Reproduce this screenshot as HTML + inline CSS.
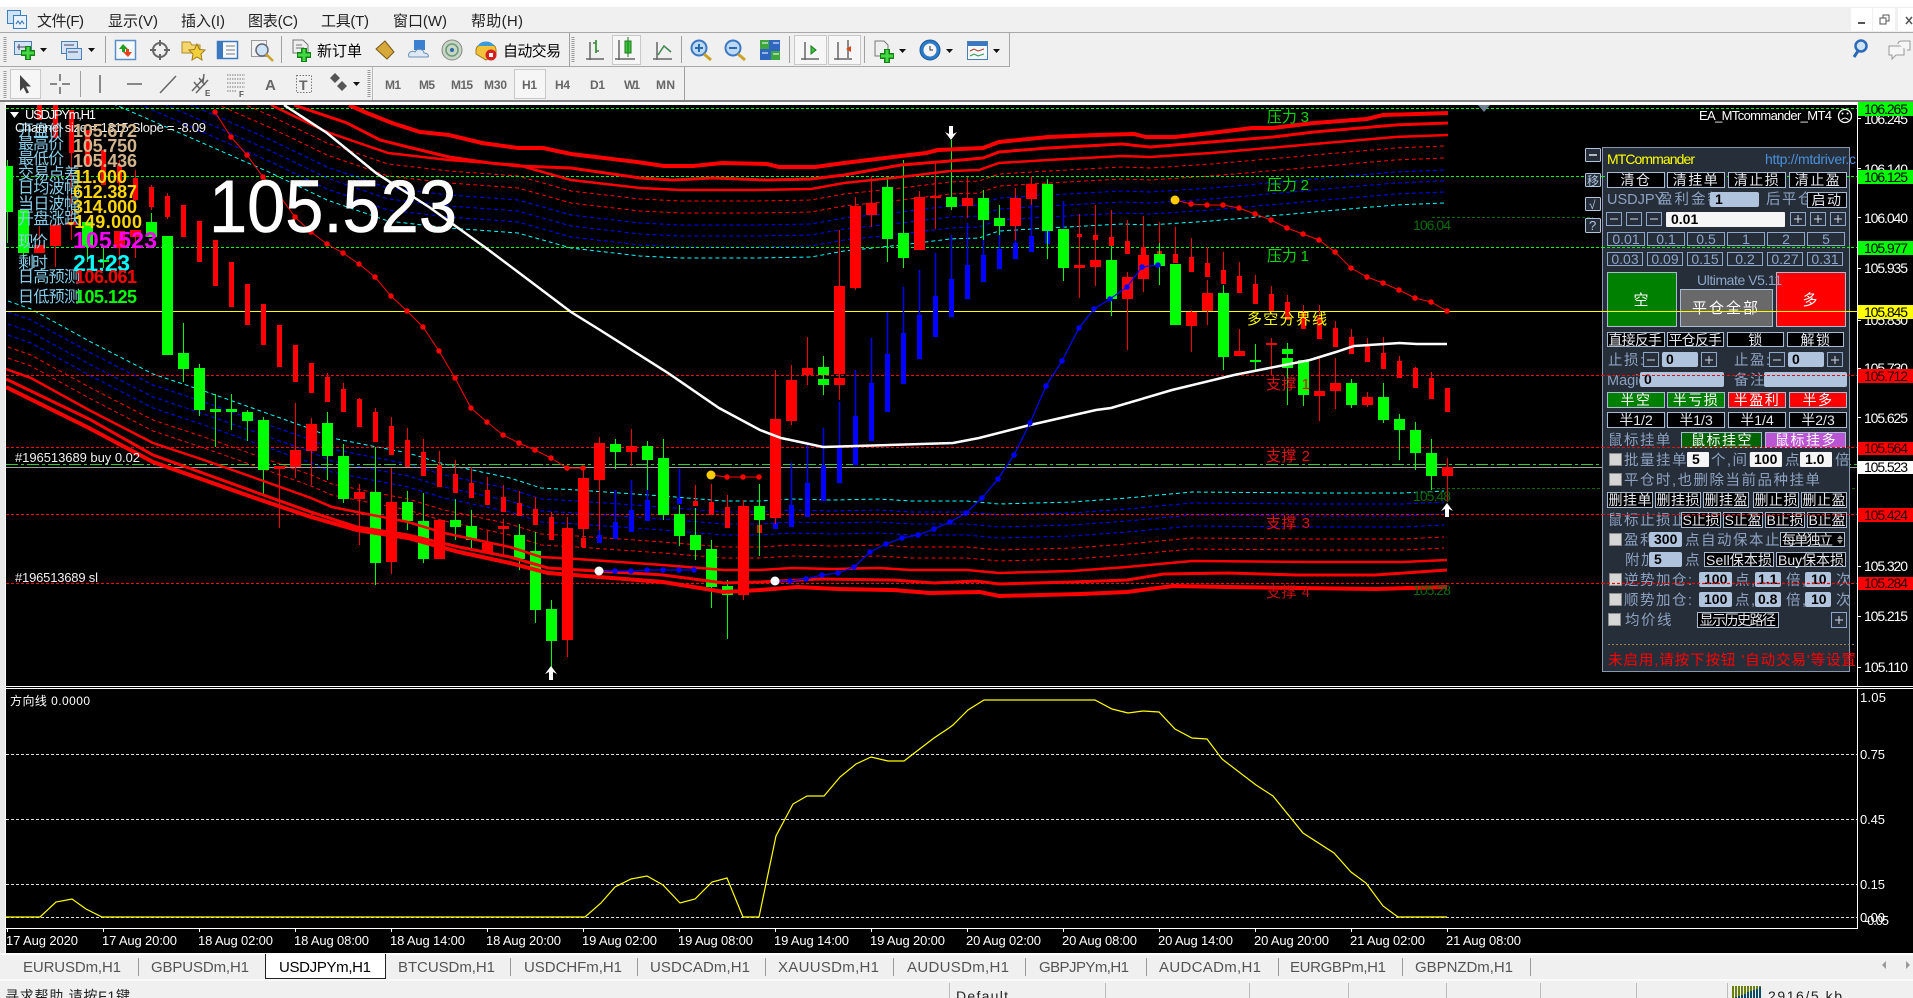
<!DOCTYPE html>
<html lang="zh"><head><meta charset="utf-8"><title>MT4</title>
<style>
html,body{margin:0;padding:0;background:#000;width:1913px;height:998px;overflow:hidden}
svg{display:block}
text{font-family:"Liberation Sans","WenQuanYi Zen Hei","Noto Sans CJK SC",sans-serif}
.cj{font-family:"Liberation Sans","Noto Sans CJK SC","WenQuanYi Zen Hei",sans-serif}
.m{font-size:15px;fill:#222}
.tf{font-size:12px;fill:#666;font-weight:bold}
.ax{font-size:14px;fill:#fff}
.axk{font-size:14px;fill:#000}
.tm{font-size:13px;fill:#fff}
.tab{font-size:15px;fill:#555}
.lb{font-size:16px;fill:#87ceeb}
.v{font-size:18px;font-weight:bold}
.bt{font-size:14px;fill:#e4e9f0;text-anchor:middle;letter-spacing:1.5px}
.nm{font-size:14px;fill:#8ea6c8;text-anchor:middle}
.l{font-size:14.5px;fill:#8ea2c0;letter-spacing:1.5px}
.iv{font-size:14px;font-weight:bold;fill:#000}
.b{fill:#000;stroke:#a9bcd6;stroke-width:1}
.g{fill:#262e3a;stroke:#8ea6c8;stroke-width:1}
.i{fill:#b0c4de}
.w{fill:#f5f5f5}
.ck{fill:#d6d6d6;stroke:#8c8c8c;stroke-width:1}
.sym{stroke:#cfd8e4;stroke-width:1;fill:none}
.ic{fill:none;stroke:#666;stroke-width:1.5}
</style></head><body>
<svg xmlns="http://www.w3.org/2000/svg" width="1913" height="998" viewBox="0 0 1913 998">
<rect width="1913" height="998" fill="#000"/>
<!-- window chrome -->
<rect width="1913" height="7" fill="#fff"/>
<rect y="7" width="1913" height="94" fill="#f0f0f0"/>
<rect x="1851" y="8" width="21" height="23" fill="#fff"/><rect x="1873" y="8" width="22" height="23" fill="#fff"/><rect x="1898" y="8" width="15" height="23" fill="#fff"/>
<path d="M1858 23h7" stroke="#555" stroke-width="2"/><path d="M1880 18h6v6h-6zM1883 18v-3h6v6h-3" stroke="#555" fill="none"/><path d="M1906 17l6 7M1912 17l-6 7" stroke="#555" stroke-width="1.5"/>
<path d="M0 32.500H1913" stroke="#a8a8a8"/><path d="M0 66.500H1009.500V33" stroke="#a8a8a8" fill="none"/>
<path d="M684.500 67V100M281.500 36V63M105.500 36V63M569.500 33V66M681.500 36V63M789.500 36V63M864.500 36V63M80.500 71V97" stroke="#a0a0a0"/>
<path d="M5 37V62M573 37V62M5 71V98M369 70V98" stroke="#999" stroke-width="3" stroke-dasharray="1 1"/>
<path d="M372.500 67V100" stroke="#bbb"/>
<rect y="100" width="1913" height="2" fill="#808080"/><rect y="102" width="1913" height="3" fill="#fff"/>
<rect y="102" width="5" height="851" fill="#e8e8e8"/><rect x="5" y="102" width="1" height="851" fill="#fff"/>
<!-- logo -->
<rect x="7.500" y="10.500" width="13" height="13" fill="#cfe3f7" stroke="#3c7fc0"/><rect x="13.500" y="15.500" width="13" height="13" fill="#e8f2fb" stroke="#3c7fc0"/><path d="M16 24l2-3 2 3 2-3 2 3" stroke="#2a6aa8" fill="none"/>
<text class="m" x="37" y="26" textLength="47">文件(F)</text>
<text class="m" x="108" y="26" textLength="50">显示(V)</text>
<text class="m" x="181" y="26" textLength="44">插入(I)</text>
<text class="m" x="248" y="26" textLength="50">图表(C)</text>
<text class="m" x="321" y="26" textLength="48">工具(T)</text>
<text class="m" x="393" y="26" textLength="54">窗口(W)</text>
<text class="m" x="471" y="26" textLength="52">帮助(H)</text>
<!-- toolbar 1 icons -->
<rect x="14.500" y="41.500" width="17" height="13" fill="#d5e3f5" stroke="#4a7fb5"/><path d="M17 47h8M19 44v6" stroke="#446"/><path d="M28 46v14M21 53h14" stroke="#138013" stroke-width="6"/><path d="M28 47v12M22 53h12" stroke="#45d845" stroke-width="3"/>
<path d="M40 48h7l-3.500 4z" fill="#111"/>
<rect x="61.500" y="41.500" width="16" height="12" fill="#d5e3f5" stroke="#4a7fb5"/><rect x="66.500" y="48.500" width="15" height="11" fill="#cfe0f2" stroke="#4a7fb5"/><path d="M64 45h10M68 52h10" stroke="#446"/>
<path d="M88 48h7l-3.500 4z" fill="#111"/>
<rect x="115.500" y="40.500" width="20" height="19" fill="#f6f9fc" stroke="#5a8fc4" stroke-width="1.500"/><path d="M123 44l-4 5h3v3h3v-3h3z" fill="#1fa11f"/><path d="M128 57l4-5h-3v-3h-3v3h-3z" fill="#e2421e"/>
<circle cx="160" cy="50" r="7" fill="none" stroke="#666" stroke-width="2"/><path d="M160 40v6M160 54v6M150 50h6M164 50h6" stroke="#666" stroke-width="2"/>
<path d="M182 42h8l2 3h8v8h-18z" fill="#f3d76c" stroke="#b08a2a"/><path d="M197 44l2.500 5.500 5.500.5-4 4 1 6-5-3-5 3 1-6-4-4 5.500-.5z" fill="#f3cf3a" stroke="#a07b1a"/>
<rect x="217.500" y="41.500" width="20" height="17" fill="#f6f9fc" stroke="#3c78c0" stroke-width="1.500"/><rect x="218" y="42" width="5" height="16" fill="#3c78c0"/><path d="M226 46h9M226 50h9M226 54h9" stroke="#777"/>
<rect x="251.500" y="40.500" width="15" height="16" fill="#f2f2f2" stroke="#999"/><circle cx="262" cy="50" r="6" fill="#cfe3f7" stroke="#667" stroke-width="1.500"/><path d="M266 54l7 7" stroke="#c9a227" stroke-width="2.500"/>
<path d="M293 40h10l5 5v8h-15z" fill="#eee" stroke="#777"/><path d="M296 45h6M296 48h8" stroke="#777"/><path d="M304 48v14M297 55h14" stroke="#138013" stroke-width="6"/><path d="M304 49v12M298 55h12" stroke="#45d845" stroke-width="3"/>
<text class="m cj" x="317" y="56" textLength="45" style="fill:#000;font-size:15px">新订单</text>
<path d="M376 49l9-8 9 11-7 7z" fill="#d6a93a" stroke="#7a5a1a"/>
<path d="M414 40h11v10h-11z" fill="#3b7fd0"/><path d="M409 57c-2-5 4-7 6-5 2-4 9-3 9 1 4 0 5 3 4 4z" fill="#dfe9f5" stroke="#6b8fb5"/>
<circle cx="452" cy="50" r="10" fill="#c6d6c2" stroke="#888"/><circle cx="452" cy="50" r="6" fill="none" stroke="#6a9a7a" stroke-width="1.500"/><circle cx="452" cy="50" r="2" fill="#2a6aa8"/>
<path d="M476 50c0-8 20-10 20 0v4l-10 6-10-6z" fill="#f2c23a" stroke="#a07b1a"/><path d="M478 46c2-6 14-6 16 0z" fill="#3b9bd8"/><circle cx="491" cy="55" r="5.500" fill="#d42020"/><rect x="489" y="53" width="4" height="4" fill="#fff"/>
<text class="m cj" x="503" y="56" textLength="58" style="fill:#000;font-size:15px">自动交易</text>
<path class="ic" d="M590 42v18M586 59h18M596 40v13M593 43h3M596 51h3" /><path d="M596 40v13" stroke="#1fa11f" stroke-width="1.500"/>
<rect x="612.500" y="35.500" width="28" height="29" fill="#f6f6f6" stroke="#c8c8c8"/><path class="ic" d="M619 40v20M615 59h20"/><rect x="625" y="41" width="6" height="12" fill="#3fc43f" stroke="#1a7a1a"/><path d="M628 37v20" stroke="#1a7a1a"/>
<path class="ic" d="M657 42v18M653 59h19M658 55l6-9 7 6"/><path d="M658 55l6-9 7 6" stroke="#2a9a4a" fill="none"/>
<circle cx="699" cy="48" r="7.500" fill="#bcd9f5" stroke="#3c78c0" stroke-width="2"/><path d="M695 48h8M699 44v8" stroke="#2a6aa8" stroke-width="2"/><path d="M704 54l7 6" stroke="#c9a227" stroke-width="3"/>
<circle cx="733" cy="48" r="7.500" fill="#bcd9f5" stroke="#3c78c0" stroke-width="2"/><path d="M729 48h8" stroke="#2a6aa8" stroke-width="2"/><path d="M738 54l7 6" stroke="#c9a227" stroke-width="3"/>
<rect x="760" y="40" width="20" height="20" fill="#2f66c0"/><rect x="760" y="40" width="9" height="9" fill="#3da63d"/><rect x="771" y="51" width="9" height="9" fill="#3da63d"/><path d="M762 43h6M773 43h6M762 53h6M773 54h6" stroke="#fff"/>
<rect x="794.500" y="35.500" width="32" height="29" fill="#f6f6f6" stroke="#c8c8c8"/><path class="ic" d="M805 42v18M801 59h18"/><path d="M811 46l5 4-5 4z" fill="#3fc43f" stroke="#1a7a1a"/>
<rect x="828.500" y="35.500" width="32" height="29" fill="#f6f6f6" stroke="#c8c8c8"/><path class="ic" d="M838 42v18M834 59h18M848 40v18"/><path d="M851 46l-5 3 5 3z" fill="#d84a1a"/>
<path d="M875 41h9l4 4v11h-13z" fill="#eee" stroke="#777"/><path d="M887 49v14M880 56h14" stroke="#138013" stroke-width="6"/><path d="M887 50v12M881 56h12" stroke="#45d845" stroke-width="3"/>
<path d="M899 49h7l-3.500 4z" fill="#111"/>
<circle cx="930" cy="50" r="10" fill="#2a7ac8" stroke="#1a5a98"/><circle cx="930" cy="50" r="6.500" fill="#f4f4f4"/><path d="M930 46v4h3" stroke="#333" fill="none"/>
<path d="M946 49h7l-3.500 4z" fill="#111"/>
<rect x="967.500" y="41.500" width="20" height="18" fill="#f4f7fb" stroke="#4a7fb5"/><rect x="968" y="42" width="19" height="4" fill="#3c78c0"/><path d="M970 51l4-2 4 2 6-2" stroke="#b03a1a" fill="none"/><path d="M970 56l4-2 4 2 6-2" stroke="#2a9a4a" fill="none"/>
<path d="M993 49h7l-3.500 4z" fill="#111"/>
<circle cx="1861" cy="46" r="5.500" fill="#cfe3f7" stroke="#2a6ab8" stroke-width="2.500"/><path d="M1858 51l-4 6" stroke="#2a6ab8" stroke-width="3"/>
<path d="M1889 46h15v9h-8l-4 4v-4h-3z" fill="#f6f6f6" stroke="#999"/><path d="M1898 44c0-3 3-3 5-3h7v9h-3" fill="#f6f6f6" stroke="#999"/>
<!-- toolbar 2 -->
<rect x="10.500" y="69.500" width="30" height="29" fill="#f6f6f6" stroke="#c8c8c8"/><path d="M20 75v16l3.500-3.500 3 6 2.500-1-3-6h5z" fill="#444"/>
<path d="M50 84h7M62 84h8M60 74v7M60 87v7" stroke="#666" stroke-width="1.500"/>
<path d="M100 75v18" stroke="#666" stroke-width="1.500"/><path d="M127 84h15" stroke="#666" stroke-width="1.500"/><path d="M160 93l16-17" stroke="#666" stroke-width="1.500"/>
<path d="M192 91l12-13M196 93l12-13M194 82l6 7M199 78l6 7M204 74l-1 8" stroke="#666" stroke-width="1.500"/><text x="205" y="96" style="font-size:8px;font-weight:bold;fill:#555">E</text>
<path d="M227 75h18M227 79h18M227 83h18M227 87h18M227 91h10" stroke="#777" stroke-dasharray="1.500 1"/><text x="239" y="97" style="font-size:8px;font-weight:bold;fill:#555">F</text>
<text x="265" y="90" style="font-size:15px;font-weight:bold;fill:#666" textLength="10">A</text>
<rect x="296.500" y="75.500" width="15" height="17" fill="none" stroke="#777" stroke-dasharray="1.500 1.500"/><text x="299" y="90" style="font-size:14px;font-weight:bold;fill:#666" textLength="10">T</text>
<path d="M335 73l5 5-5 5-5-5zM342 81l5 5-5 5-5-5z" fill="#555"/><path d="M353 82h7l-3.500 4z" fill="#111"/>
<rect x="514.500" y="69.500" width="31" height="29" fill="#f6f6f6" stroke="#c8c8c8"/>
<text class="tf" x="385" y="89" textLength="16">M1</text><text class="tf" x="419" y="89" textLength="16">M5</text><text class="tf" x="451" y="89" textLength="22">M15</text><text class="tf" x="484" y="89" textLength="23">M30</text><text class="tf" x="522" y="89" textLength="15">H1</text><text class="tf" x="555" y="89" textLength="15">H4</text><text class="tf" x="590" y="89" textLength="15">D1</text><text class="tf" x="624" y="89" textLength="16">W1</text><text class="tf" x="656" y="89" textLength="19">MN</text>

<!-- main chart -->
<svg x="6" y="105" width="1851" height="581" viewBox="6 105 1851 581">
<!-- upper dashed channel -->
<g fill="none" stroke-width="1" stroke-dasharray="4 3">
<path id="u" stroke="#f00" transform="translate(0,11)" d="M100 30L271 105 327 132 388 153 449 160 518 165 571 180 640 188 681 190 754 190 811 189 844 183 901 177 950 171 979 170 999 163 1048 160 1122 156 1150 157 1211 153 1280 147 1314 144 1395 137 1444 135"/>
<path stroke="#f00" transform="translate(0,23)" d="M100 30L271 105 327 132 388 153 449 160 518 165 571 180 640 188 681 190 754 190 811 189 844 183 901 177 950 171 979 170 999 163 1048 160 1122 156 1150 157 1211 153 1280 147 1314 144 1395 137 1444 135"/>
<path stroke="#00f" transform="translate(0,35)" d="M100 30L271 105 327 132 388 153 449 160 518 165 571 180 640 188 681 190 754 190 811 189 844 183 901 177 950 171 979 170 999 163 1048 160 1122 156 1150 157 1211 153 1280 147 1314 144 1395 137 1444 135"/>
<path stroke="#00f" transform="translate(0,46)" d="M100 30L271 105 327 132 388 153 449 160 518 165 571 180 640 188 681 190 754 190 811 189 844 183 901 177 950 171 979 170 999 163 1048 160 1122 156 1150 157 1211 153 1280 147 1314 144 1395 137 1444 135"/>
<path stroke="#00f" transform="translate(0,57)" d="M100 30L271 105 327 132 388 153 449 160 518 165 571 180 640 188 681 190 754 190 811 189 844 183 901 177 950 171 979 170 999 163 1048 160 1122 156 1150 157 1211 153 1280 147 1314 144 1395 137 1444 135"/>
<path stroke="#0ff" transform="translate(0,68)" d="M100 30L271 105 327 132 388 153 449 160 518 165 571 180 640 188 681 190 754 190 811 189 844 183 901 177 950 171 979 170 999 163 1048 160 1122 156 1150 157 1211 153 1280 147 1314 144 1395 137 1444 135"/>
<!-- lower dashed channel -->
<path stroke="#f00" transform="translate(0,-12)" d="M8 370L31 378 89 410 153 443 204 460 255 478 311 498 332 507 372 515 408 522 444 533 510 547 541 557 577 559 663 565 724 570 760 570 792 568 833 569 879 568 911 570 967 570 999 573 1072 571 1127 567 1192 561 1311 562 1403 562 1444 560"/>
<path stroke="#f00" transform="translate(0,-23)" d="M8 370L31 378 89 410 153 443 204 460 255 478 311 498 332 507 372 515 408 522 444 533 510 547 541 557 577 559 663 565 724 570 760 570 792 568 833 569 879 568 911 570 967 570 999 573 1072 571 1127 567 1192 561 1311 562 1403 562 1444 560"/>
<path stroke="#00f" transform="translate(0,-35)" d="M8 370L31 378 89 410 153 443 204 460 255 478 311 498 332 507 372 515 408 522 444 533 510 547 541 557 577 559 663 565 724 570 760 570 792 568 833 569 879 568 911 570 967 570 999 573 1072 571 1127 567 1192 561 1311 562 1403 562 1444 560"/>
<path stroke="#00f" transform="translate(0,-46)" d="M8 370L31 378 89 410 153 443 204 460 255 478 311 498 332 507 372 515 408 522 444 533 510 547 541 557 577 559 663 565 724 570 760 570 792 568 833 569 879 568 911 570 967 570 999 573 1072 571 1127 567 1192 561 1311 562 1403 562 1444 560"/>
<path stroke="#00f" transform="translate(0,-58)" d="M8 370L31 378 89 410 153 443 204 460 255 478 311 498 332 507 372 515 408 522 444 533 510 547 541 557 577 559 663 565 724 570 760 570 792 568 833 569 879 568 911 570 967 570 999 573 1072 571 1127 567 1192 561 1311 562 1403 562 1444 560"/>
<path stroke="#0ff" transform="translate(0,-69)" d="M8 370L31 378 89 410 153 443 204 460 255 478 311 498 332 507 372 515 408 522 444 533 510 547 541 557 577 559 663 565 724 570 760 570 792 568 833 569 879 568 911 570 967 570 999 573 1072 571 1127 567 1192 561 1311 562 1403 562 1444 560"/>
</g>
<!-- horizontal lines -->
<g fill="none" stroke-width="1" shape-rendering="crispEdges">
<path d="M6 108.500H1857M6 176.500H1857M6 247.500H1857" stroke="#0f0" stroke-dasharray="3 2"/>
<path d="M6 375.500H1857M6 447.500H1857M6 514.500H1857M6 583.500H1857" stroke="#f00" stroke-dasharray="3 2"/>
<path d="M6 311.500H1857" stroke="#ff0"/>
<path d="M1432 217.500H1593M1432 488.500H1857" stroke="#0a6a0a" stroke-dasharray="3 2"/>
<path d="M6 464.500H1857" stroke="#2ecc2e" stroke-dasharray="12 3 3 3"/>
<path d="M6 467.500H1857" stroke="#a0a0a0"/>
</g>
<!-- thin blue candles -->
<path d="M599 535V543M615 522V539M631 510V532M647 500V521M663 496V511M679 498V504M775 523V529M791 505V527M807 483V517M823 465V501M839 447V483M855 416V465M871 383V441M887 354V412M903 333V384M919 315V359M935 296V337M951 279V317M967 265V299M983 255V282M999 249V269M1015 243V259M1031 236V252M1047 231V244M1063 231V238" stroke="#00f" stroke-width="5" transform="translate(.5,0)" fill="none"/>
<path d="M599 514V535M615 490V522M631 480V510M647 473V500M663 467V496M679 469V498M775 496V523M791 463V505M807 445V483M823 428V465M839 402V447M855 370V416M871 338V383M887 312V354M903 287V333M919 270V315M935 253V296M951 235V279M967 223V265M983 217V255M999 217V249M1015 212V243M1031 203V236M1047 202V231M1063 201V231" stroke="#00f" stroke-width="1.500" transform="translate(.5,0)" fill="none"/>
<!-- thin red candles -->
<path d="M39 105V120M55 105V138M71 110V153M87 130V165M103 150V185M119 165V183M135 178V200M151 187V207M167 196V217M183 205V237M199 221V262M215 240V286M231 262V307M247 284V325M263 304V345M279 325V367M295 345V382M311 363V393M327 377V402M343 389V412M359 399V427M375 412V442M391 426V455M407 440V467M423 452V476M439 465V487M455 474V493M471 483V498M487 490V505M503 497V512M519 503V516M535 509V525M551 517V540M583 538V547M695 501V506M711 502V515M727 507V528M759 525V533M1079 234V237M1095 235V240M1111 237V246M1127 241V254M1143 247V256M1159 251V258M1175 254V263M1191 257V272M1207 263V277M1223 270V284M1239 276V293M1255 284V304M1271 294V311M1287 302V320M1303 313V329M1319 317V339M1335 328V347M1351 337V354M1367 344V362M1383 353V369M1399 361V378M1415 368V388M1431 378V399M1447 388V412" stroke="#f00" stroke-width="5" transform="translate(.5,0)" fill="none"/>
<path d="M119 160V186M135 170V203M151 185V210M167 193V219M327 373V377M343 383V389M359 398V399M375 408V412M391 417V426M407 428V440M423 439V452M439 451V465M455 460V474M471 467V483M487 477V490M503 485V497M519 491V503M535 497V509M551 512V517M695 485V501M711 484V502M727 495V507M1111 210V237M1127 220V241M1143 216V247M1159 222V251M1175 227V254M1191 238V257M1207 247V263M1223 252V270M1239 262V276M1255 275V284M1271 286V294M1287 295V302M1303 305V313M1319 305V317M1335 321V328M1351 329V337M1367 338V344M1383 337V353M1399 356V361M1415 367V368M1431 372V378" stroke="#f00" stroke-width="1" transform="translate(.5,0)" fill="none"/>
<!-- wicks -->
<path d="M7 160V243M23 253V270M87 247V262M103 247V268M151 213V222M183 323V382M199 364V416M215 394V447M231 394V430M247 410V441M263 417V494M327 412V480M343 444V503M375 447V585M407 491V530M423 493V563M455 499V540M471 510V550M519 524V570M535 532V623M551 600V672M615 439V469M647 441V490M663 439V520M679 505V546M695 508V560M711 540V608M727 580V639M759 484V556M823 356V395M887 178V262M903 160V268M951 140V210M983 190V240M999 205V235M1047 179V259M1063 229V281M1111 246V316M1159 243V285M1223 285V370M1255 344V370M1287 343V405M1303 360V406M1351 379V408M1383 383V423M1399 414V460M1415 422V470M1431 439V490" stroke="#0f0" stroke-width="1" transform="translate(.5,0)" fill="none" shape-rendering="crispEdges"/>
<path d="M39 226V253M55 246V267M71 150V240M119 248V272M135 237V258M279 468V528M295 403V478M311 418V485M359 484V545M391 468V574M487 531V552M503 519V555M567 517V657M583 470V545M599 437V530M631 429V466M743 500V600M775 370V524M791 365V425M807 337V385M839 230V400M855 197V290M871 176V227M919 191V250M935 163V229M967 177V218M1015 188V240M1031 176V205M1079 214V298M1095 205V286M1127 272V350M1143 248V292M1191 310V352M1207 280V325M1239 329V356M1271 338V375M1319 358V421M1335 358V409M1367 392V407M1447 458V502" stroke="#f00" stroke-width="1" transform="translate(.5,0)" fill="none" shape-rendering="crispEdges"/>
<!-- bodies -->
<path d="M7 166V212M23 210V253M87 222V247M103 260V262M151 222V237M167 236V355M183 353V369M199 368V410M215 409V412M231 409V412M247 412V421M263 420V470M327 423V456M343 456V499M375 492V563M407 502V521M423 521V559M455 520V527M471 526V540M519 535V559M535 551V610M551 609V641M615 444V452M647 446V460M663 458V515M679 514V536M695 535V550M711 549V587M727 586V595M759 506V520M823 367V375M823 379V385M887 187V239M903 233V258M951 197V207M983 198V220M999 218V226M1047 184V231M1063 229V268M1111 260V299M1159 254V266M1175 264V325M1223 293V357M1255 360V362M1287 349V354M1287 358V368M1303 360V395M1351 383V405M1383 397V420M1399 419V430M1415 430V453M1431 453V476" stroke="#0f0" stroke-width="11" transform="translate(.5,0)" fill="none" shape-rendering="crispEdges"/>
<path d="M39 245V253M55 225V246M71 222V225M119 231V248M135 230V237M279 466V469M295 450V467M311 424V451M359 492V499M391 502V562M439 520V559M487 543V552M503 526V529M567 528V640M583 478V529M599 443V480M631 446V452M743 506V595M775 419V518M791 380V421M807 368V375M839 286V374M839 378V385M855 206V288M871 203V215M919 197V250M935 196V198M967 198V206M1015 198V226M1031 184V199M1079 265V268M1095 260V267M1127 277V299M1143 255V279M1191 312V326M1207 293V311M1239 351V356M1271 343V345M1319 391V396M1335 383V391M1367 397V405M1447 467V476" stroke="#f00" stroke-width="11" transform="translate(.5,0)" fill="none" shape-rendering="crispEdges"/>
<!-- thick envelope -->
<g fill="none" stroke="#f00">
<path stroke-width="4" d="M349 105L367 113 392 123 420 132 449 135 482 143 518 148 543 148 571 154 637 162 664 166 693 166 722 163 767 164 779 167 815 167 844 163 885 158 926 153 938 150 983 148 999 142 1048 137 1097 135 1134 134 1146 137 1175 137 1211 133 1252 128 1273 128 1314 123 1367 119 1383 115 1448 113"/>
<path stroke-width="3" d="M294 105L347 123 380 140 408 147 449 157 490 163 518 166 571 168 640 178 673 180 713 178 767 180 811 179 844 175 901 165 950 161 983 158 999 152 1048 148 1122 144 1150 147 1211 142 1273 137 1314 132 1395 125 1448 123"/>
<path stroke-width="2.500" d="M271 105L327 132 388 153 449 160 518 165 571 180 640 188 681 190 754 190 811 189 844 183 901 177 950 171 979 170 999 163 1048 160 1122 156 1150 157 1211 153 1280 147 1314 144 1395 137 1448 135"/>
<path stroke-width="2.500" d="M6 369L31 378 89 410 153 443 204 460 255 478 311 498 332 507 372 515 408 522 444 533 510 547 541 557 577 559 663 565 724 570 760 570 792 568 833 569 879 568 911 570 967 570 999 573 1072 571 1127 567 1192 561 1311 562 1403 562 1447 560"/>
<path stroke-width="3" d="M6 379L89 419 153 455 255 492 311 512 357 527 408 535 459 547 510 557 548 568 663 575 724 583 760 582 820 579 893 580 934 583 976 581 999 584 1072 582 1127 580 1164 574 1228 573 1297 575 1375 575 1447 570"/>
<path stroke-width="4" d="M6 387L89 428 153 462 255 498 311 517 357 530 408 538 459 552 510 563 548 573 663 582 724 592 760 590 797 587 838 589 893 590 930 593 980 592 999 596 1081 594 1127 592 1173 586 1228 587 1375 589 1447 587"/>
</g>
<!-- white MA -->
<path d="M284 105L327 133 376 173 429 207 486 248 518 272 571 312 600 330 668 373 719 408 760 430 781 438 800 442 823 447 856 446 953 443 979 438 1030 425 1096 410 1111 408 1172 390 1234 375 1310 360 1336 352 1354 346 1399 343 1417 344 1447 344" fill="none" stroke="#fff" stroke-width="2.500"/>
<!-- red dotted -->
<path d="M215 112L231 137 247 155 263 177 279 195 295 217 311 232 327 244 343 253 359 264 375 277 391 296 407 311 423 327 439 351 455 378 471 408 487 422 503 435 519 443 535 450 551 458 567 468 583 468M711 475L727 477 743 477 759 477M1175 200L1191 204 1207 205 1223 205 1239 208 1255 214 1271 220 1287 228 1303 234 1319 240 1335 252 1351 268 1367 277 1383 283 1399 290 1415 298 1431 302 1447 311" fill="none" stroke="#f00" stroke-width="1"/>
<path d="M215 112h0M231 137h0M247 155h0M263 177h0M279 195h0M295 217h0M311 232h0M327 244h0M343 253h0M359 264h0M375 277h0M391 296h0M407 311h0M423 327h0M439 351h0M455 378h0M471 408h0M487 422h0M503 435h0M519 443h0M535 450h0M551 458h0M567 468h0M583 468h0M727 477h0M743 477h0M759 477h0M1191 204h0M1207 205h0M1223 205h0M1239 208h0M1255 214h0M1271 220h0M1287 228h0M1303 234h0M1319 240h0M1335 252h0M1351 268h0M1367 277h0M1383 283h0M1399 290h0M1415 298h0M1431 302h0M1447 311h0" fill="none" stroke="#f00" stroke-width="5.500" stroke-linecap="round"/>
<circle cx="711" cy="475" r="4.500" fill="#ffcc00"/><circle cx="1175" cy="200" r="4.500" fill="#ffcc00"/>
<!-- blue dotted -->
<path d="M599 571L615 571 631 571 647 570 663 570 679 570 694 570M775 581L790 581 806 579 822 575 838 573 854 567 870 552 886 544 902 538 918 535 934 529 950 522 966 513 982 498 998 479 1014 455 1030 423 1046 386 1062 361 1079 328 1094 309 1110 299 1127 287 1142 267 1158 265" fill="none" stroke="#00f" stroke-width="1.200"/>
<path d="M615 571h0M631 571h0M647 570h0M663 570h0M679 570h0M694 570h0M790 581h0M806 579h0M822 575h0M838 573h0M854 567h0M870 552h0M886 544h0M902 538h0M918 535h0M934 529h0M950 522h0M966 513h0M982 498h0M998 479h0M1014 455h0M1030 423h0M1046 386h0M1062 361h0M1079 328h0M1094 309h0M1110 299h0M1127 287h0M1142 267h0M1158 265h0" fill="none" stroke="#00f" stroke-width="5.500" stroke-linecap="round"/>
<circle cx="599" cy="571" r="4.500" fill="#fff"/><circle cx="775" cy="581" r="4.500" fill="#fff"/>
<!-- arrows -->
<path d="M551 666l6 8-4-2v8h-4v-8l-4 2z" fill="#fff"/>
<path d="M1447 503l6 8-4-2v8h-4v-8l-4 2z" fill="#fff"/>
<path d="M951 140l6-8-4 2v-8h-4v8l-4-2z" fill="#fff"/>
<path d="M1478 105h12l-6 7z" fill="#708090"/>
<!-- chart labels -->
<g class="cj">
<text x="1267" y="122" style="font-size:15px;fill:#00ff00;opacity:.85" textLength="42" xml:space="preserve">压力 3</text>
<text x="1267" y="190" style="font-size:15px;fill:#00ff00;opacity:.85" textLength="42" xml:space="preserve">压力 2</text>
<text x="1267" y="261" style="font-size:15px;fill:#00ff00;opacity:.85" textLength="42" xml:space="preserve">压力 1</text>
<text x="1247" y="324" style="font-size:15px;fill:#ffff00" textLength="80">多空分界线</text>
<text x="1266" y="389" style="font-size:15px;fill:#e01010" textLength="44" xml:space="preserve">支撑 1</text>
<text x="1266" y="461" style="font-size:15px;fill:#e01010" textLength="44" xml:space="preserve">支撑 2</text>
<text x="1266" y="528" style="font-size:15px;fill:#e01010" textLength="44" xml:space="preserve">支撑 3</text>
<text x="1266" y="597" style="font-size:15px;fill:#c01010" textLength="44" xml:space="preserve">支撑 4</text>
</g>
<text x="1413" y="230" style="font-size:14px;fill:#0a6a0a" textLength="38">106.04</text>
<text x="1413" y="501" style="font-size:14px;fill:#0a6a0a" textLength="38">105.48</text>
<text x="1413" y="595" style="font-size:14px;fill:#0a6a0a" textLength="38">105.28</text>
<path d="M10 112h9l-4.500 6z" fill="#fff"/>
<text x="25" y="119" style="font-size:13px;fill:#fff" textLength="71">USDJPYm,H1</text>
<text class="cj" x="18" y="136" style="font-size:16px;fill:#87ceeb" textLength="46">开盘价</text>
<text x="15" y="132" style="font-size:13px;fill:#f0f0f0" textLength="191">Channel size = 1315 Slope = -8.09</text>
<text class="v" x="73" y="137" fill="#d2b48c" textLength="64">105.672</text>
<text class="lb" x="18" y="149" textLength="46">最高价</text><text class="v" x="73" y="152" fill="#d2b48c" textLength="64">105.750</text>
<text class="lb" x="18" y="164" textLength="46">最低价</text><text class="v" x="73" y="167" fill="#d2b48c" textLength="64">105.436</text>
<text class="lb" x="18" y="179" textLength="62">交易点差</text><text class="v" x="73" y="183" fill="#ffd700" textLength="54">11.000</text>
<text class="lb" x="18" y="193" textLength="62">日均波幅</text><text class="v" x="73" y="198" fill="#ffd700" textLength="64">612.387</text>
<text class="lb" x="18" y="209" textLength="62">当日波幅</text><text class="v" x="73" y="213" fill="#ffd700" textLength="64">314.000</text>
<text class="lb" x="18" y="224" textLength="62">开盘涨跌</text><text class="v" x="68" y="228" fill="#ffd700" textLength="74">-149.000</text>
<text class="lb" x="18" y="247" textLength="30">现价</text><text class="v" x="73" y="248" fill="#ff00ff" style="font-size:23px" textLength="84">105.523</text>
<text class="lb" x="18" y="268" textLength="30">剩时</text><text class="v" x="73" y="271" fill="#00ffff" style="font-size:23px" textLength="57">21:23</text>
<text class="lb" x="18" y="282" textLength="62">日高预测</text><text class="v" x="75" y="283" fill="#ff0000" textLength="62">106.061</text>
<text class="lb" x="18" y="302" textLength="62">日低预测</text><text class="v" x="75" y="303" fill="#00ff00" textLength="62">105.125</text>
<text x="209" y="232" style="font-size:74px;fill:#fff;stroke:#fff;stroke-width:.6" textLength="248" lengthAdjust="spacingAndGlyphs">105.523</text>
<text x="15" y="462" style="font-size:13px;fill:#f0f0f0" textLength="125">#196513689 buy 0.02</text>
<text x="15" y="582" style="font-size:13px;fill:#f0f0f0" textLength="83">#196513689 sl</text>
<text x="1699" y="120" style="font-size:13px;fill:#fff" textLength="133">EA_MTcommander_MT4</text>
<circle cx="1845" cy="116" r="6.500" fill="none" stroke="#fff" stroke-width="1.300"/><path d="M1842.500 113.500h.01M1847.500 113.500h.01" stroke="#fff" stroke-width="2" stroke-linecap="round"/><path d="M1841.500 120c2-2.500 5-2.500 7 0" stroke="#fff" fill="none"/>
</svg>

<!-- axis main -->
<path d="M1857.500 105V686" stroke="#fff"/>
<path d="M1858 118.500h3M1858 168.500h3M1858 217.500h3M1858 268.500h3M1858 320.500h3M1858 368.500h3M1858 417.500h3M1858 566.500h3M1858 616.500h3M1858 667.500h3" stroke="#fff"/>
<text class="ax" x="1864" y="124" textLength="44">106.245</text>
<text class="ax" x="1864" y="174" textLength="44">106.140</text>
<text class="ax" x="1864" y="223" textLength="44">106.040</text>
<text class="ax" x="1864" y="273" textLength="44">105.935</text>
<text class="ax" x="1864" y="325" textLength="44">105.830</text>
<text class="ax" x="1864" y="373" textLength="44">105.730</text>
<text class="ax" x="1864" y="423" textLength="44">105.625</text>
<text class="ax" x="1864" y="571" textLength="44">105.320</text>
<text class="ax" x="1864" y="621" textLength="44">105.215</text>
<text class="ax" x="1864" y="672" textLength="44">105.110</text>
<rect x="1858" y="102" width="55" height="14" fill="#0f0"/><text class="axk" x="1864" y="114" textLength="44">106.265</text>
<rect x="1858" y="170" width="55" height="14" fill="#0f0"/><text class="axk" x="1864" y="182" textLength="44">106.125</text>
<rect x="1858" y="241" width="55" height="14" fill="#0f0"/><text class="axk" x="1864" y="253" textLength="44">105.977</text>
<rect x="1858" y="305" width="55" height="14" fill="#ff0"/><text class="axk" x="1864" y="317" textLength="44">105.845</text>
<rect x="1858" y="369" width="55" height="14" fill="#f00"/><text class="axk" x="1864" y="381" textLength="44" opacity=".85">105.712</text>
<rect x="1858" y="442" width="55" height="13" fill="#f00"/><text class="axk" x="1864" y="453" textLength="44" opacity=".85">105.564</text>
<rect x="1858" y="461" width="55" height="13" fill="#fff"/><text class="axk" x="1864" y="472" textLength="44">105.523</text>
<rect x="1858" y="508" width="55" height="14" fill="#f00"/><text class="axk" x="1864" y="520" textLength="44" opacity=".85">105.424</text>
<rect x="1858" y="577" width="55" height="13" fill="#f00"/><text class="axk" x="1864" y="588" textLength="44" opacity=".85">105.284</text>

<!-- side buttons -->
<g>
<rect x="1585.500" y="148.500" width="15" height="13" rx="1" fill="#262e3a" stroke="#b0c4de"/><path d="M1589 155h8" stroke="#e4e9f0" stroke-width="1.500"/>
<rect x="1585.500" y="173.500" width="15" height="13" rx="1" fill="#262e3a" stroke="#b0c4de"/><text class="cj" x="1587" y="185" style="font-size:12px;fill:#b0c4de">移</text>
<rect x="1585.500" y="197.500" width="15" height="13" rx="1" fill="#262e3a" stroke="#b0c4de"/><text x="1589" y="209" style="font-size:12px;fill:#b0c4de">√</text>
<rect x="1585.500" y="218.500" width="15" height="14" rx="1" fill="#262e3a" stroke="#b0c4de"/><text x="1589" y="230" style="font-size:13px;fill:#b0c4de">?</text>
</g>
<!-- panel -->
<rect x="1602.500" y="147.500" width="247" height="524" fill="#262e3a" stroke="#8898ae"/>
<path d="M1602 176.500H1850M1602 247.500H1850" stroke="#0f0" stroke-dasharray="3 2"/>
<text x="1607" y="164" style="font-size:14px;fill:#ffff00" textLength="88">MTCommander</text>
<text x="1765" y="164" style="font-size:14px;fill:#4a90d9" textLength="91">http://mtdriver.c</text>
<g class="cj">
<rect class="b" x="1607.500" y="172.500" width="57" height="15"/><text class="bt" x="1636" y="185">清仓</text>
<rect class="b" x="1667.500" y="172.500" width="57" height="15"/><text class="bt" x="1696" y="185">清挂单</text>
<rect class="b" x="1728.500" y="172.500" width="57" height="15"/><text class="bt" x="1757" y="185">清止损</text>
<rect class="b" x="1789.500" y="172.500" width="57" height="15"/><text class="bt" x="1818" y="185">清止盈</text>
<text class="l" x="1607" y="204" style="letter-spacing:0">USDJPY</text><text class="l" x="1658" y="204" style="letter-spacing:2px">盈利金额</text>
<rect class="i" x="1710" y="192" width="49" height="15" rx="2"/><text class="iv" x="1715" y="204">1</text>
<text class="l" x="1766" y="204">后平仓</text>
<rect class="b" x="1807.500" y="192.500" width="39" height="15"/><text class="bt" x="1827" y="205">启动</text>
<rect class="g" x="1606.500" y="212.500" width="15" height="13"/><path d="M1610 219h8" class="sym"/>
<rect class="g" x="1626.500" y="212.500" width="15" height="13"/><path d="M1630 219h8" class="sym"/>
<rect class="g" x="1646.500" y="212.500" width="15" height="13"/><path d="M1650 219h8" class="sym"/>
<rect class="w" x="1666" y="212" width="119" height="15" rx="1"/><text class="iv" x="1671" y="224">0.01</text>
<rect class="g" x="1790.500" y="212.500" width="15" height="13"/><path d="M1794 219h8M1798 215v8" class="sym"/>
<rect class="g" x="1810.500" y="212.500" width="15" height="13"/><path d="M1814 219h8M1818 215v8" class="sym"/>
<rect class="g" x="1830.500" y="212.500" width="15" height="13"/><path d="M1834 219h8M1838 215v8" class="sym"/>
<rect class="g" x="1607.500" y="232.500" width="37" height="13"/><text class="nm" x="1626" y="244">0.01</text>
<rect class="g" x="1647.500" y="232.500" width="37" height="13"/><text class="nm" x="1666" y="244">0.1</text>
<rect class="g" x="1687.500" y="232.500" width="37" height="13"/><text class="nm" x="1706" y="244">0.5</text>
<rect class="g" x="1727.500" y="232.500" width="37" height="13"/><text class="nm" x="1746" y="244">1</text>
<rect class="g" x="1767.500" y="232.500" width="37" height="13"/><text class="nm" x="1786" y="244">2</text>
<rect class="g" x="1807.500" y="232.500" width="37" height="13"/><text class="nm" x="1826" y="244">5</text>
<rect class="g" x="1607.500" y="252.500" width="35" height="13"/><text class="nm" x="1625" y="264">0.03</text>
<rect class="g" x="1647.500" y="252.500" width="35" height="13"/><text class="nm" x="1665" y="264">0.09</text>
<rect class="g" x="1687.500" y="252.500" width="35" height="13"/><text class="nm" x="1705" y="264">0.15</text>
<rect class="g" x="1727.500" y="252.500" width="35" height="13"/><text class="nm" x="1745" y="264">0.2</text>
<rect class="g" x="1767.500" y="252.500" width="35" height="13"/><text class="nm" x="1785" y="264">0.27</text>
<rect class="g" x="1807.500" y="252.500" width="35" height="13"/><text class="nm" x="1825" y="264">0.31</text>
<rect x="1607.500" y="272.500" width="69" height="54" fill="#008000" stroke="#a9bcd6"/><text x="1641" y="305" style="font-size:15px;fill:#fff;text-anchor:middle">空</text>
<rect x="1680.500" y="289.500" width="92" height="37" fill="#696969" stroke="#a9bcd6"/><text x="1726" y="313" style="font-size:15px;fill:#fff;text-anchor:middle;letter-spacing:2px">平仓全部</text>
<rect x="1776.500" y="272.500" width="69" height="54" fill="#f00" stroke="#a9bcd6"/><text x="1810" y="305" style="font-size:15px;fill:#fff;text-anchor:middle">多</text>
<text x="1697" y="285" style="font-size:14px;fill:#8ea6c8" textLength="85">Ultimate V5.11</text>
<path d="M1602 311.500H1850" stroke="#ff0"/>
<rect class="b" x="1607.500" y="332.500" width="57" height="14"/><text class="bt" x="1636" y="345" textLength="55">直接反手</text>
<rect class="b" x="1667.500" y="332.500" width="56" height="14"/><text class="bt" x="1696" y="345" textLength="55">平仓反手</text>
<rect class="b" x="1727.500" y="332.500" width="56" height="14"/><text class="bt" x="1756" y="345">锁</text>
<rect class="b" x="1787.500" y="332.500" width="56" height="14"/><text class="bt" x="1816" y="345">解锁</text>
<text class="l" x="1608" y="365">止损:</text>
<rect class="g" x="1643.500" y="352.500" width="15" height="14"/><path d="M1647 360h8" class="sym"/>
<rect class="i" x="1662" y="352" width="36" height="15" rx="2"/><text class="iv" x="1666" y="364">0</text>
<rect class="g" x="1701.500" y="352.500" width="15" height="14"/><path d="M1705 360h8M1709 356v8" class="sym"/>
<text class="l" x="1734" y="365">止盈:</text>
<rect class="g" x="1769.500" y="352.500" width="15" height="14"/><path d="M1773 360h8" class="sym"/>
<rect class="i" x="1788" y="352" width="36" height="15" rx="2"/><text class="iv" x="1792" y="364">0</text>
<rect class="g" x="1827.500" y="352.500" width="15" height="14"/><path d="M1831 360h8M1835 356v8" class="sym"/>
<text class="l" x="1607" y="385" style="letter-spacing:0">Magic</text>
<rect class="i" x="1640" y="372" width="84" height="15" rx="2"/><text class="iv" x="1644" y="384">0</text>
<text class="l" x="1734" y="385">备注</text>
<rect class="i" x="1764" y="372" width="83" height="15" rx="2"/>
<path d="M1602 375.500H1850" stroke="#f00" stroke-dasharray="3 2"/>
<rect x="1607.500" y="392.500" width="57" height="15" fill="#008000" stroke="#a9bcd6"/><text class="bt" x="1636" y="405" style="fill:#fff">半空</text>
<rect x="1667.500" y="392.500" width="57" height="15" fill="#008000" stroke="#a9bcd6"/><text class="bt" x="1696" y="405" style="fill:#fff">半亏损</text>
<rect x="1728.500" y="392.500" width="57" height="15" fill="#f00" stroke="#a9bcd6"/><text class="bt" x="1757" y="405" style="fill:#fff">半盈利</text>
<rect x="1789.500" y="392.500" width="57" height="15" fill="#f00" stroke="#a9bcd6"/><text class="bt" x="1818" y="405" style="fill:#fff">半多</text>
<rect class="b" x="1607.500" y="412.500" width="57" height="15"/><text class="bt" x="1636" y="425" style="letter-spacing:0">半1/2</text>
<rect class="b" x="1667.500" y="412.500" width="57" height="15"/><text class="bt" x="1696" y="425" style="letter-spacing:0">半1/3</text>
<rect class="b" x="1728.500" y="412.500" width="57" height="15"/><text class="bt" x="1757" y="425" style="letter-spacing:0">半1/4</text>
<rect class="b" x="1789.500" y="412.500" width="57" height="15"/><text class="bt" x="1818" y="425" style="letter-spacing:0">半2/3</text>
<text class="l" x="1608" y="445">鼠标挂单</text>
<rect x="1681.500" y="432.500" width="80" height="15" fill="#006400" stroke="#a9bcd6"/><text class="bt" x="1722" y="445" style="fill:#fff">鼠标挂空</text>
<rect x="1765.500" y="432.500" width="80" height="15" fill="#ba55d3" stroke="#a9bcd6"/><text class="bt" x="1806" y="445" style="fill:#fff">鼠标挂多</text>
<path d="M1602 447.500H1850" stroke="#f00" stroke-dasharray="3 2"/>
<rect class="ck" x="1609.500" y="453.500" width="12" height="12"/>
<text class="l" x="1624" y="465">批量挂单</text>
<rect class="w" x="1687" y="452" width="22" height="15" rx="1"/><text class="iv" x="1692" y="464">5</text>
<text class="l" x="1711" y="465">个,间隔</text>
<rect class="w" x="1750" y="452" width="32" height="15" rx="1"/><text class="iv" x="1754" y="464">100</text>
<text class="l" x="1785" y="465">点</text>
<rect class="w" x="1800" y="452" width="32" height="15" rx="1"/><text class="iv" x="1805" y="464">1.0</text>
<text class="l" x="1835" y="465">倍</text>
<rect class="ck" x="1609.500" y="473.500" width="12" height="12"/>
<text class="l" x="1624" y="485">平仓时,也删除当前品种挂单</text>
<rect class="b" x="1607.500" y="492.500" width="45" height="15"/><text class="bt" x="1630" y="505" style="letter-spacing:0" textLength="43">删挂单</text>
<rect class="b" x="1655.500" y="492.500" width="45" height="15"/><text class="bt" x="1678" y="505" style="letter-spacing:0" textLength="43">删挂损</text>
<rect class="b" x="1703.500" y="492.500" width="45" height="15"/><text class="bt" x="1726" y="505" style="letter-spacing:0" textLength="43">删挂盈</text>
<rect class="b" x="1753.500" y="492.500" width="45" height="15"/><text class="bt" x="1776" y="505" style="letter-spacing:0" textLength="43">删止损</text>
<rect class="b" x="1801.500" y="492.500" width="45" height="15"/><text class="bt" x="1824" y="505" style="letter-spacing:0" textLength="43">删止盈</text>
<text class="l" x="1608" y="525">鼠标止损止盈</text>
<rect class="b" x="1681.500" y="512.500" width="39" height="15"/><text class="bt" x="1701" y="525" style="letter-spacing:0" textLength="37">S止损</text>
<rect class="b" x="1723.500" y="512.500" width="39" height="15"/><text class="bt" x="1743" y="525" style="letter-spacing:0" textLength="37">S止盈</text>
<rect class="b" x="1765.500" y="512.500" width="39" height="15"/><text class="bt" x="1785" y="525" style="letter-spacing:0" textLength="37">B止损</text>
<rect class="b" x="1807.500" y="512.500" width="39" height="15"/><text class="bt" x="1827" y="525" style="letter-spacing:0" textLength="37">B止盈</text>
<path d="M1602 514.500H1850" stroke="#f00" stroke-dasharray="3 2"/>
<rect class="ck" x="1609.500" y="533.500" width="12" height="12"/>
<text class="l" x="1624" y="545">盈利</text>
<rect class="i" x="1649" y="532" width="33" height="15" rx="2"/><text class="iv" x="1654" y="544">300</text>
<text class="l" x="1685" y="545">点自动保本止损</text>
<rect class="b" x="1780.500" y="532.500" width="64" height="14"/><text class="bt" x="1808" y="545" style="letter-spacing:1px" textLength="52">每单独立</text>
<path d="M1840 535l3 4h-6zM1840 544l3-4h-6z" fill="#999"/>
<text class="l" x="1625" y="565">附加</text>
<rect class="i" x="1649" y="552" width="33" height="15" rx="2"/><text class="iv" x="1654" y="564">5</text>
<text class="l" x="1685" y="565">点</text>
<rect class="b" x="1704.500" y="552.500" width="69" height="14"/><text class="bt" x="1739" y="565" style="letter-spacing:0" textLength="66">Sell保本损</text>
<rect class="b" x="1776.500" y="552.500" width="69" height="14"/><text class="bt" x="1811" y="565" style="letter-spacing:0" textLength="66">Buy保本损</text>
<rect class="ck" x="1609.500" y="573.500" width="12" height="12"/>
<text class="l" x="1624" y="585">逆势加仓:</text>
<rect class="i" x="1699" y="572" width="33" height="15" rx="2"/><text class="iv" x="1704" y="584">100</text>
<text class="l" x="1735" y="585">点,</text>
<rect class="i" x="1755" y="572" width="26" height="15" rx="2"/><text class="iv" x="1758" y="584">1.1</text>
<text class="l" x="1786" y="585">倍,</text>
<rect class="i" x="1805" y="572" width="26" height="15" rx="2"/><text class="iv" x="1811" y="584">10</text>
<text class="l" x="1836" y="585">次</text>
<path d="M1602 583.500H1850" stroke="#f00" stroke-width="1.200" stroke-dasharray="3 2"/>
<rect class="ck" x="1609.500" y="593.500" width="12" height="12"/>
<text class="l" x="1624" y="605">顺势加仓:</text>
<rect class="i" x="1699" y="592" width="33" height="15" rx="2"/><text class="iv" x="1704" y="604">100</text>
<text class="l" x="1735" y="605">点,</text>
<rect class="i" x="1755" y="592" width="26" height="15" rx="2"/><text class="iv" x="1758" y="604">0.8</text>
<text class="l" x="1786" y="605">倍,</text>
<rect class="i" x="1805" y="592" width="26" height="15" rx="2"/><text class="iv" x="1811" y="604">10</text>
<text class="l" x="1836" y="605">次</text>
<rect class="ck" x="1608.500" y="613.500" width="12" height="12"/>
<text class="l" x="1625" y="625">均价线</text>
<rect class="b" x="1697.500" y="612.500" width="81" height="15"/><text class="bt" x="1738" y="625" style="letter-spacing:.5px" textLength="77">显示历史路径</text>
<rect class="g" x="1831.500" y="612.500" width="15" height="15"/><path d="M1835 620h8M1839 616v8" class="sym"/>
<path d="M1608 644.500H1854" stroke="#a08050" stroke-dasharray="2 2"/>
<text x="1608" y="665" style="font-size:14.500px;fill:#f00" textLength="248">未启用,请按下按钮 '自动交易'等设置</text>
</g>
<!-- sub window separators -->
<rect x="6" y="686" width="1907" height="1" fill="#fff"/><rect x="6" y="688" width="1907" height="1" fill="#fff"/>
<!-- indicator pane -->
<text class="cj" x="10" y="705" style="font-size:12px;fill:#fff" textLength="80">方向线 0.0000</text>
<path d="M6 754.500H1857M6 819.500H1857M6 884.500H1857M6 917.500H1857" stroke="#ddd" stroke-dasharray="3 2" fill="none"/>
<path d="M6 917L40 917 56 902 72 899 86 909 102 917 585 917 601 903 615 887 631 879 647 876 663 885 680 903 695 899 712 882 727 878 743 917 759 917 776 836 793 804 807 796 824 796 840 777 856 764 871 757 888 761 904 761 917 751 934 738 949 728 953 725 968 710 984 700 1095 700 1112 709 1128 713 1143 711 1159 712 1175 729 1192 738 1207 739 1222 759 1256 785 1273 796 1303 833 1334 853 1351 872 1366 883 1383 906 1398 917 1447 917" fill="none" stroke="#ff0" stroke-width="1.200"/>
<path d="M1857.500 689V928.500H6" stroke="#fff" fill="none"/>
<g class="tm">
<text x="1860" y="702" class="tm" textLength="26">1.05</text>
<text x="1860" y="759" class="tm" textLength="25">0.75</text>
<text x="1860" y="824" class="tm" textLength="25">0.45</text>
<text x="1860" y="889" class="tm" textLength="25">0.15</text>
<text x="1860" y="922" class="tm" textLength="25">0.00</text>
<text x="1864" y="925" class="tm" textLength="25">-0.05</text>
</g>
<path d="M7.500 929v3M103.500 929v3M199.500 929v3M295.500 929v3M391.500 929v3M487.500 929v3M583.500 929v3M679.500 929v3M775.500 929v3M871.500 929v3M967.500 929v3M1063.500 929v3M1159.500 929v3M1255.500 929v3M1351.500 929v3M1447.500 929v3" stroke="#fff"/>
<text class="tm" x="6" y="945" textLength="72">17 Aug 2020</text>
<text class="tm" x="102" y="945" textLength="75">17 Aug 20:00</text>
<text class="tm" x="198" y="945" textLength="75">18 Aug 02:00</text>
<text class="tm" x="294" y="945" textLength="75">18 Aug 08:00</text>
<text class="tm" x="390" y="945" textLength="75">18 Aug 14:00</text>
<text class="tm" x="486" y="945" textLength="75">18 Aug 20:00</text>
<text class="tm" x="582" y="945" textLength="75">19 Aug 02:00</text>
<text class="tm" x="678" y="945" textLength="75">19 Aug 08:00</text>
<text class="tm" x="774" y="945" textLength="75">19 Aug 14:00</text>
<text class="tm" x="870" y="945" textLength="75">19 Aug 20:00</text>
<text class="tm" x="966" y="945" textLength="75">20 Aug 02:00</text>
<text class="tm" x="1062" y="945" textLength="75">20 Aug 08:00</text>
<text class="tm" x="1158" y="945" textLength="75">20 Aug 14:00</text>
<text class="tm" x="1254" y="945" textLength="75">20 Aug 20:00</text>
<text class="tm" x="1350" y="945" textLength="75">21 Aug 02:00</text>
<text class="tm" x="1446" y="945" textLength="75">21 Aug 08:00</text>
<!-- tabs -->
<rect y="953" width="1913" height="2" fill="#fff"/>
<rect y="955" width="1913" height="24" fill="#f0f0f0"/>
<rect y="979" width="1913" height="2" fill="#fafafa"/>
<rect y="981" width="1913" height="17" fill="#f0f0f0"/>
<path d="M138.500 958V976M510.500 958V976M637.500 958V976M765.500 958V976M893.500 958V976M1025.500 958V976M1146.500 958V976M1278.500 958V976M1402.500 958V976M1530.500 958V976" stroke="#999"/>
<path d="M266 978V955H385V978Z" fill="#fff"/><path d="M265.500 979V954.500H385.500V979M265.500 978.500H385.500" fill="none" stroke="#222"/><path d="M266 954.500H385" stroke="#fff"/>
<text class="tab" x="23" y="972" textLength="98">EURUSDm,H1</text>
<text class="tab" x="151" y="972" textLength="98">GBPUSDm,H1</text>
<text class="tab" x="279" y="972" textLength="92" style="fill:#000">USDJPYm,H1</text>
<text class="tab" x="398" y="972" textLength="97">BTCUSDm,H1</text>
<text class="tab" x="524" y="972" textLength="98">USDCHFm,H1</text>
<text class="tab" x="650" y="972" textLength="100">USDCADm,H1</text>
<text class="tab" x="778" y="972" textLength="101">XAUUSDm,H1</text>
<text class="tab" x="907" y="972" textLength="102">AUDUSDm,H1</text>
<text class="tab" x="1039" y="972" textLength="90">GBPJPYm,H1</text>
<text class="tab" x="1159" y="972" textLength="102">AUDCADm,H1</text>
<text class="tab" x="1290" y="972" textLength="96">EURGBPm,H1</text>
<text class="tab" x="1415" y="972" textLength="98">GBPNZDm,H1</text>
<path d="M1886 961l-4 4 4 4zM1906 961l4 4-4 4z" fill="#999"/>
<!-- status bar -->
<path d="M949.500 983V998M1105.500 983V998M1249.500 983V998M1348.500 983V998M1446.500 983V998M1540.500 983V998M1636.500 983V998M1727.500 983V998" stroke="#bbb"/>
<text class="cj" x="5" y="1001" style="font-size:14px;fill:#222" textLength="125">寻求帮助,请按F1键</text>
<text x="956" y="1001" style="font-size:14px;fill:#222" textLength="52">Default</text>
<path d="M1733 986v12M1736 986v12M1739 986v12M1742 986v12M1745 986v12M1748 986v12M1751 986v12M1754 986v12M1757 986v12M1760 986v12" stroke="#6b7f10" stroke-width="2"/>
<path d="M1736 998v-1M1739 998v-2M1742 998v-3M1745 998v-4M1748 998v-6M1751 998v-7M1754 998v-8M1757 998v-9M1760 998v-11" stroke="#0d4a66" stroke-width="2"/>
<text x="1768" y="1001" style="font-size:14px;fill:#222" textLength="74">2916/5 kb</text>
</svg>
</body></html>
